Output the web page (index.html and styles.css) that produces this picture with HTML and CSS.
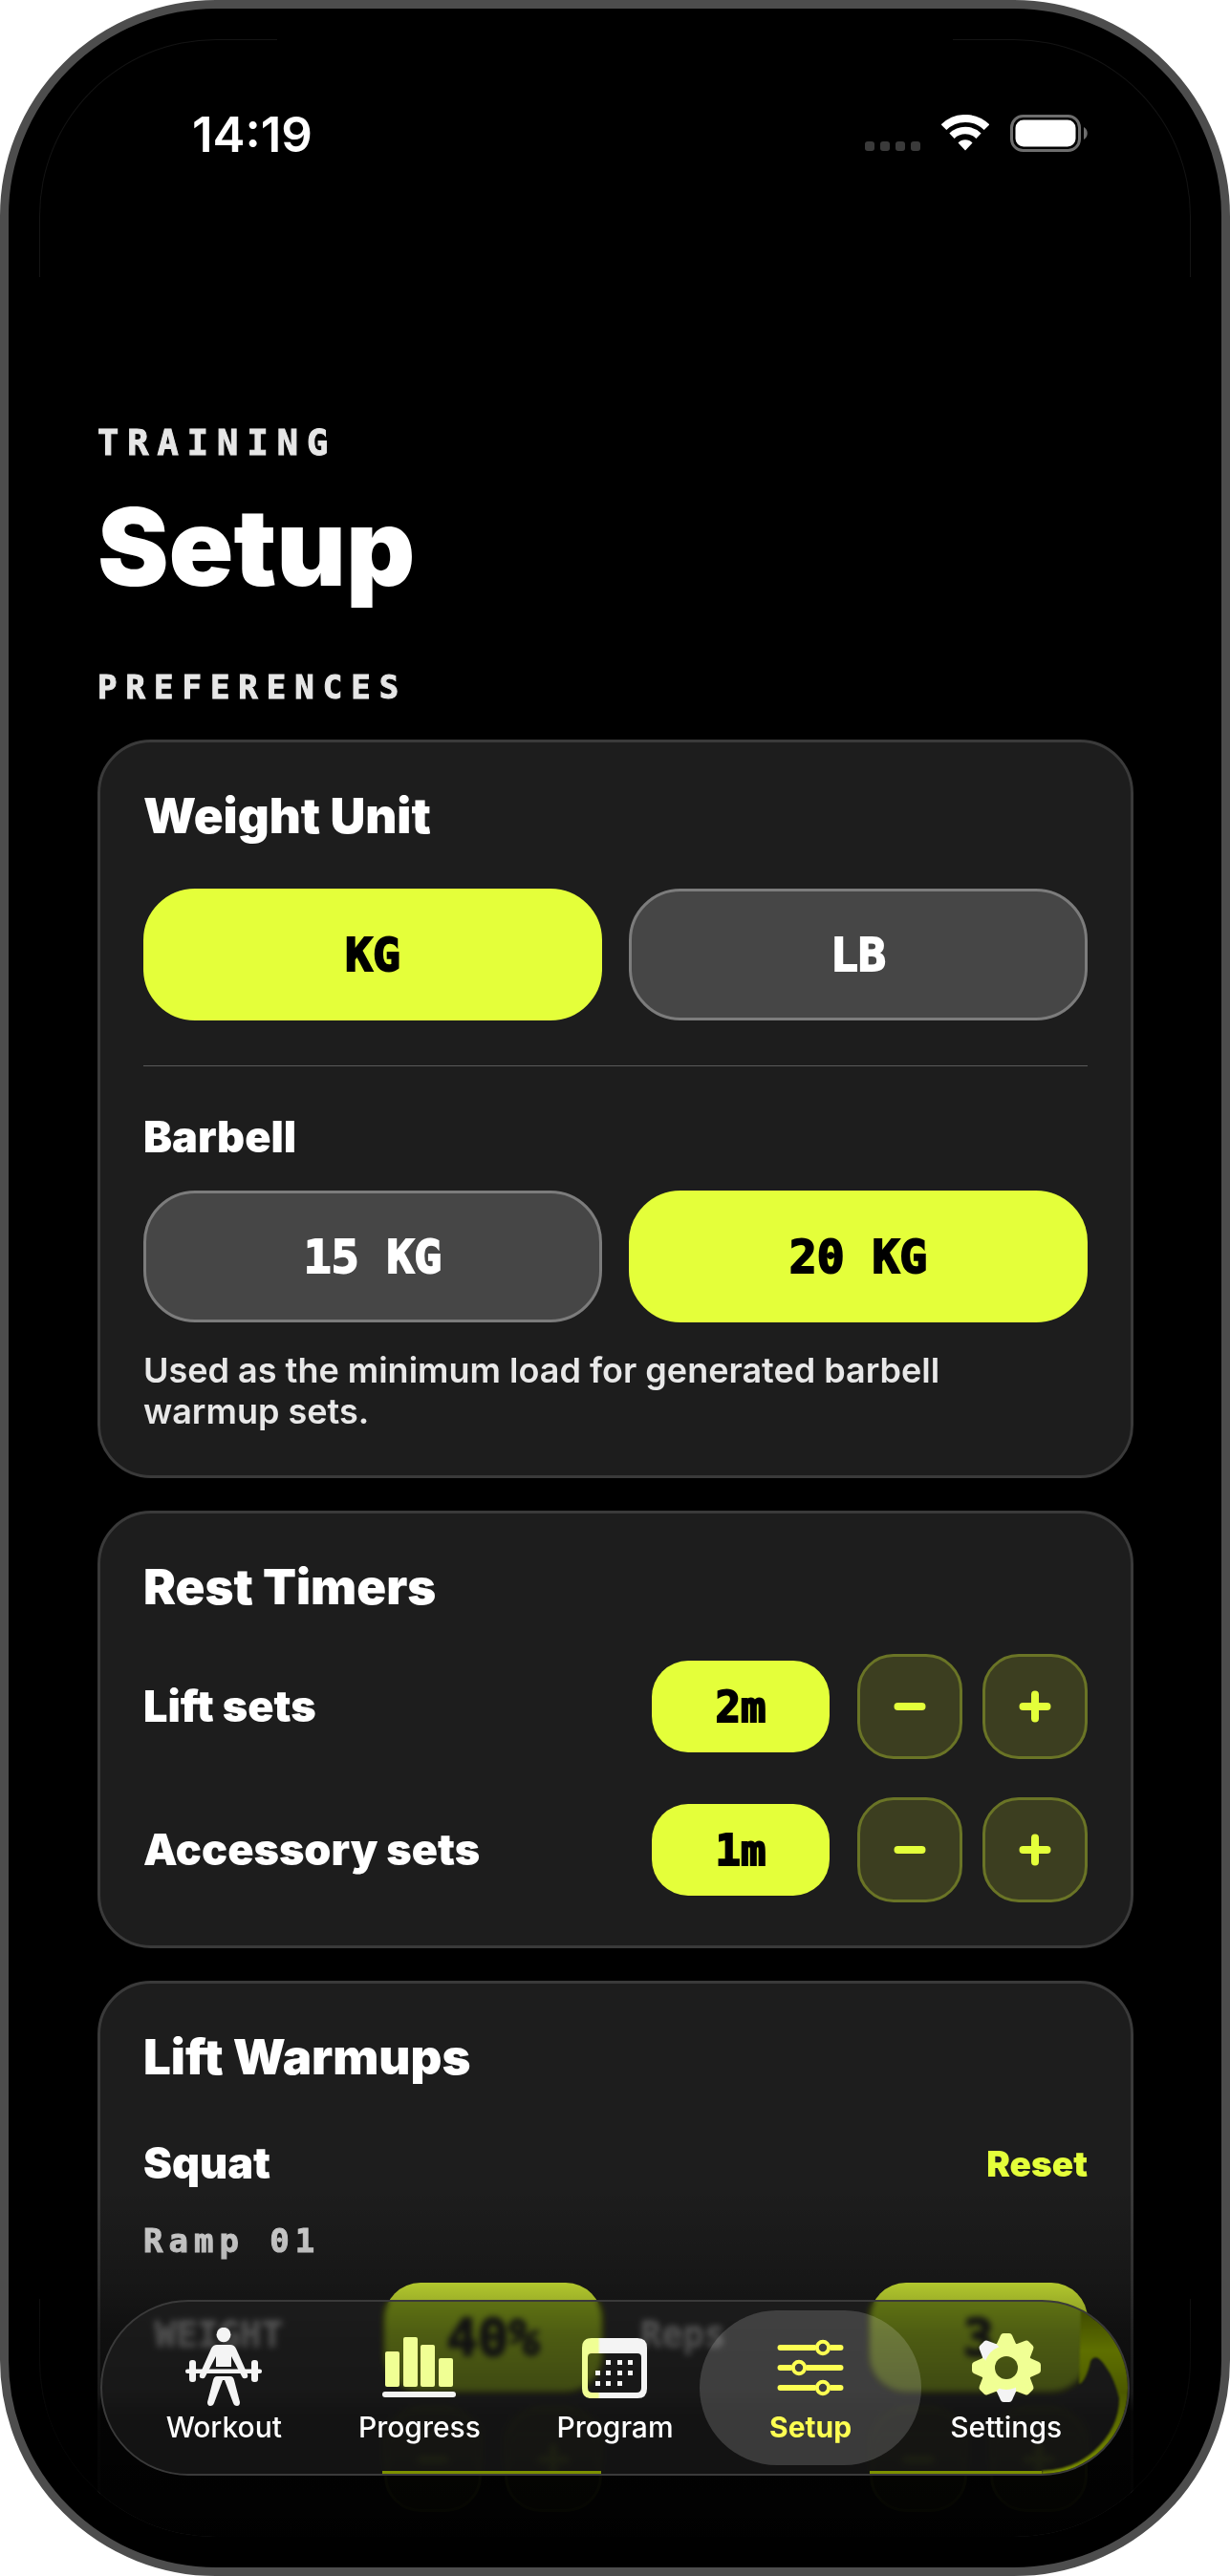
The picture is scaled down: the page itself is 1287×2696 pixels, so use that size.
FILE: index.html
```html
<!DOCTYPE html>
<html lang="en">
<head>
    <meta charset="UTF-8">
    <meta name="viewport" content="width=device-width, initial-scale=1.0">
    <title>Setup</title>
    <link rel="stylesheet" href="styles.css">
</head>
<body>
    <div class="phone">
        <span class="corner corner-tl"></span>
        <span class="corner corner-tr"></span>
        <span class="corner corner-bl"></span>
        <span class="corner corner-br"></span>

        <div class="screen">
            <header class="status-bar">
                <span class="clock">14:19</span>
                <div class="status-icons">
                    <svg width="58" height="12" viewBox="0 0 58 12" fill="#3a3a3a">
                        <rect width="10" height="10" rx="3"/>
                        <rect x="16" width="10" height="10" rx="3"/>
                        <rect x="32" width="10" height="10" rx="3"/>
                        <rect x="48" width="10" height="10" rx="3"/>
                    </svg>
                    <svg width="50" height="40" viewBox="0 0 50 40" fill="none" stroke="#fff">
                        <path d="M2.5 13.2a32 32 0 0 1 45 0" stroke-width="8"/>
                        <path d="M11 22.2a20 20 0 0 1 28 0" stroke-width="7.5"/>
                        <path d="M25 37.5l-7.5-8a10.500 10.500 0 0 1 15 0z" fill="#fff" stroke="none"/>
                    </svg>
                    <svg width="82" height="40" viewBox="0 0 82 40">
                        <rect x="1.500" y="1.500" width="71" height="36" rx="12" fill="none" stroke="#6e6e6e" stroke-width="3"/>
                        <rect x="5.500" y="5.500" width="63" height="28" rx="8.500" fill="#fff"/>
                        <path d="M77 13c5 2.500 5 10.500 0 13z" fill="#6e6e6e"/>
                    </svg>
                </div>
            </header>

            <main class="content">
                <p class="eyebrow">TRAINING</p>
                <h1>Setup</h1>
                <p class="section-label">PREFERENCES</p>

                <section class="card">
                    <h2>Weight Unit</h2>
                    <div class="segments">
                        <button type="button" class="segment selected" aria-pressed="true">KG</button>
                        <button type="button" class="segment" aria-pressed="false">LB</button>
                    </div>
                    <hr>
                    <h3>Barbell</h3>
                    <div class="segments segments-tight">
                        <button type="button" class="segment" aria-pressed="false">15 KG</button>
                        <button type="button" class="segment selected" aria-pressed="true">20 KG</button>
                    </div>
                    <p class="hint">Used as the minimum load for generated barbell warmup sets.</p>
                </section>

                <section class="card">
                    <h2>Rest Timers</h2>
                    <div class="timers">
                        <div class="timer">
                            <h3>Lift sets</h3>
                            <output class="value">2m</output>
                            <div class="stepper">
                                <button type="button" class="step" aria-label="Decrease lift sets rest">
                                    <svg width="34" height="34" viewBox="0 0 34 34"><path d="M4.500 17h25"/></svg>
                                </button>
                                <button type="button" class="step" aria-label="Increase lift sets rest">
                                    <svg width="34" height="34" viewBox="0 0 34 34"><path d="M4.500 17h25M17 4.500v25"/></svg>
                                </button>
                            </div>
                        </div>
                        <div class="timer">
                            <h3>Accessory sets</h3>
                            <output class="value">1m</output>
                            <div class="stepper">
                                <button type="button" class="step" aria-label="Decrease accessory sets rest">
                                    <svg width="34" height="34" viewBox="0 0 34 34"><path d="M4.500 17h25"/></svg>
                                </button>
                                <button type="button" class="step" aria-label="Increase accessory sets rest">
                                    <svg width="34" height="34" viewBox="0 0 34 34"><path d="M4.500 17h25M17 4.500v25"/></svg>
                                </button>
                            </div>
                        </div>
                    </div>
                </section>

                <section class="card">
                    <h2>Lift Warmups</h2>
                    <div class="lift-head">
                        <h3>Squat</h3>
                        <button type="button" class="reset">Reset</button>
                    </div>
                    <p class="ramp-label">Ramp 01</p>
                    <div class="ramp">
                        <div class="ramp-field">
                            <span class="ramp-name">WEIGHT</span>
                            <div class="ramp-control">
                                <output class="value">40%</output>
                                <div class="stepper">
                                    <button type="button" class="step" aria-label="Decrease weight">
                                        <svg width="34" height="34" viewBox="0 0 34 34"><path d="M4.500 17h25"/></svg>
                                    </button>
                                    <button type="button" class="step" aria-label="Increase weight">
                                        <svg width="34" height="34" viewBox="0 0 34 34"><path d="M4.500 17h25M17 4.500v25"/></svg>
                                    </button>
                                </div>
                            </div>
                        </div>
                        <div class="ramp-field">
                            <span class="ramp-name">Reps</span>
                            <div class="ramp-control">
                                <output class="value">3</output>
                                <div class="stepper">
                                    <button type="button" class="step" aria-label="Decrease reps">
                                        <svg width="34" height="34" viewBox="0 0 34 34"><path d="M4.500 17h25"/></svg>
                                    </button>
                                    <button type="button" class="step" aria-label="Increase reps">
                                        <svg width="34" height="34" viewBox="0 0 34 34"><path d="M4.500 17h25M17 4.500v25"/></svg>
                                    </button>
                                </div>
                            </div>
                        </div>
                    </div>
                </section>
            </main>

            <div class="fade"></div>

            <nav class="tab-bar">
                <!-- light bent round the rim of the glass -->
                <svg class="rim" viewBox="0 0 1077 184" preserveAspectRatio="none" fill="none">
                    <defs>
                        <linearGradient id="rim-fill" x1="0" y1="0" x2="0" y2="1">
                            <stop offset="0" stop-color="#3f4a00"/>
                            <stop offset="0.25" stop-color="#5f7000"/>
                            <stop offset="0.5" stop-color="#4c5900"/>
                            <stop offset="1" stop-color="#7d9100"/>
                        </linearGradient>
                    </defs>
                    <path d="M295 181h229" stroke="#7d9100" stroke-width="4"/>
                    <path d="M805 181H985" stroke="#7d9100" stroke-width="4"/>
                    <path class="rim-glow" d="M1026 10Q1052 22 1064 46Q1077 70 1076 92Q1074 136 1046 162Q1020 184 985 183V179Q1018 178 1040 158Q1066 134 1066 103Q1061 82 1052 70Q1042 54 1036 64Q1031 86 1024 88Z" fill="url(#rim-fill)"/>
                </svg>

                <a href="#workout" class="tab">
                    <svg width="80" height="84" viewBox="0 0 80 84" fill="#f4f4f4">
                        <ellipse cx="40" cy="7.500" rx="7.500" ry="7.700"/>
                        <path d="M33 18h14q4 0 6 4l12 27q1 4-2 4-3 1-4-2L48 30v11H32V30L21 51q-1 3-4 2-3 0-2-4l12-27q2-4 6-4z"/>
                        <rect y="43.500" width="80" height="4.500" rx="2"/>
                        <rect x="4" y="34" width="7" height="23" rx="3"/>
                        <rect x="69" y="34" width="7" height="23" rx="3"/>
                        <path d="M33 51h14q3 0 4 4l6 23q0 4-3 4t-4-3L41 55h-2l-9 24q-1 3-4 3t-3-4l6-23q1-4 4-4z"/>
                    </svg>
                    <span>Workout</span>
                </a>
                <a href="#progress" class="tab">
                    <svg width="77" height="64" viewBox="0 0 77 64" fill="#f0ff94">
                        <rect x="3" y="15" width="15" height="37" rx="2"/>
                        <rect x="22" width="15" height="52" rx="2"/>
                        <rect x="40" y="8" width="15" height="44" rx="2"/>
                        <rect x="59" y="22" width="15" height="30" rx="2"/>
                        <rect y="57" width="77" height="6" rx="3" fill="#f4f4f4"/>
                    </svg>
                    <span>Progress</span>
                </a>
                <a href="#program" class="tab">
                    <svg width="68" height="63" viewBox="0 0 68 63">
                        <defs>
                            <linearGradient id="lit" x1="0" x2="1">
                                <stop offset="0.24" stop-color="#f0ff94"/>
                                <stop offset="0.28" stop-color="#f4f4f4"/>
                            </linearGradient>
                        </defs>
                        <path fill="url(#lit)" fill-rule="evenodd" d="M10 0H58Q68 0 68 10V53Q68 63 58 63H10Q0 63 0 53V10Q0 0 10 0ZM10 16Q6 16 6 20V52Q6 57 11 57H57Q62 57 62 52V20Q62 16 58 16Z"/>
                        <g fill="#f4f4f4">
                            <rect x="25" y="23" width="5" height="5"/>
                            <rect x="37" y="23" width="5" height="5"/>
                            <rect x="48" y="23" width="5" height="5"/>
                            <rect x="14" y="34" width="5" height="5"/>
                            <rect x="25" y="34" width="5" height="5"/>
                            <rect x="37" y="34" width="5" height="5"/>
                            <rect x="48" y="34" width="5" height="5"/>
                            <rect x="14" y="45" width="5" height="5"/>
                            <rect x="25" y="45" width="5" height="5"/>
                            <rect x="37" y="45" width="5" height="5"/>
                        </g>
                    </svg>
                    <span>Program</span>
                </a>
                <a href="#setup" class="tab active" aria-current="page">
                    <svg width="70" height="60" viewBox="0 0 70 60" fill="none" stroke="#fdff52" stroke-linecap="round">
                        <path d="M3.500 9H38M58 9h8.500M3.500 30H13M33 30h33.500M3.500 51H38M58 51h8.500" stroke-width="6"/>
                        <circle cx="48" cy="9" r="6.200" stroke-width="4"/>
                        <circle cx="23" cy="30" r="6.200" stroke-width="4"/>
                        <circle cx="48" cy="51" r="6.200" stroke-width="4"/>
                        <path d="M38 9h2M56 9h2M13 30h2M31 30h2M38 51h2M56 51h2" stroke-width="6" stroke-linecap="butt"/>
                    </svg>
                    <span>Setup</span>
                </a>
                <a href="#settings" class="tab">
                    <svg width="72" height="72" viewBox="-36 -36 72 72">
                        <defs>
                            <path id="tooth" d="M-10-25L-6-34Q-5-36-3-36H3Q5-36 6-34L10-25V-18H-10Z"/>
                            <mask id="hub">
                                <rect x="-36" y="-36" width="72" height="72" fill="#fff"/>
                                <circle r="12" fill="#000"/>
                            </mask>
                        </defs>
                        <g mask="url(#hub)" fill="#f0ff94">
                            <circle r="27"/>
                            <use href="#tooth"/>
                            <use href="#tooth" transform="rotate(45)"/>
                            <use href="#tooth" transform="rotate(90)"/>
                            <use href="#tooth" transform="rotate(135)"/>
                            <use href="#tooth" transform="rotate(180)" fill="#f4f4f4"/>
                            <use href="#tooth" transform="rotate(225)"/>
                            <use href="#tooth" transform="rotate(270)"/>
                            <use href="#tooth" transform="rotate(315)" fill="#f4f4f4"/>
                            <circle r="23"/>
                        </g>
                    </svg>
                    <span>Settings</span>
                </a>
            </nav>
        </div>
    </div>
</body>
</html>
```

FILE: styles.css
```css
* {
    box-sizing: border-box;
}

body {
    margin: 0;
    background: #fff;
    color: #fff;
    font-family: Inter, "Liberation Sans", sans-serif;
}

h1, h2, h3, p {
    margin: 0;
}

button {
    padding: 0;
    border: 0;
    background: none;
    color: inherit;
    font: inherit;
}

svg {
    display: block;
}

.phone {
    position: relative;
    height: 100vh;
    padding: 32px;
    border: 9px solid #4d4d4d;
    border-radius: 226px;
    background: #000;
    overflow: hidden;
}

/* faint edge of the display, only visible in the corners */
.corner {
    position: absolute;
    width: 249px;
    height: 249px;
    border: 0 solid #141414;
}

.corner-tl {
    top: 32px;
    left: 32px;
    border-width: 1px 0 0 1px;
    border-top-left-radius: 185px;
}

.corner-tr {
    top: 32px;
    right: 32px;
    border-width: 1px 1px 0 0;
    border-top-right-radius: 185px;
}

.corner-bl {
    bottom: 32px;
    left: 32px;
    border-width: 0 0 1px 1px;
    border-bottom-left-radius: 185px;
}

.corner-br {
    bottom: 32px;
    right: 32px;
    border-width: 0 1px 1px 0;
    border-bottom-right-radius: 185px;
}

.screen {
    position: relative;
    height: 100%;
    border-radius: 185px;
    overflow: hidden;
}

.status-bar {
    display: flex;
    justify-content: space-between;
    align-items: center;
    height: 198px;
    padding: 0 107px 0 160px;
}

.clock {
    font-size: 51px;
    font-weight: 600;
}

.status-icons {
    display: flex;
    align-items: flex-end;
    gap: 22px;
}

.content {
    padding: 203px 60px 0 61px;
}

.eyebrow,
.section-label,
.ramp-label,
.ramp-name,
.segment,
.value {
    font-family: "DejaVu Sans Mono", monospace;
    font-weight: 700;
    -webkit-text-stroke: 1px currentColor;
}

.eyebrow {
    color: #e6e6e6;
    font-size: 37px;
    line-height: 44px;
    letter-spacing: 9px;
}

h1 {
    margin-top: 21px;
    font-size: 112px;
    font-weight: 900;
    line-height: 130px;
}

.section-label {
    margin-top: 62px;
    margin-bottom: 35px;
    color: #e6e6e6;
    font-size: 34px;
    line-height: 40px;
    letter-spacing: 9px;
}

.card {
    margin-bottom: 34px;
    padding: 45px;
    border: 3px solid #3a3a3a;
    border-radius: 56px;
    background: #1d1d1d;
}

h2 {
    font-size: 51px;
    font-weight: 900;
    line-height: 64px;
}

h3 {
    font-size: 45px;
    font-weight: 900;
    line-height: 54px;
}

.segments {
    display: grid;
    grid-template-columns: 1fr 1fr;
    gap: 28px;
    margin-top: 44px;
}

.segments-tight {
    margin-top: 29px;
}

.segment {
    height: 138px;
    border: 3px solid #7c7c7c;
    border-radius: 54px;
    background: #464646;
    color: #fff;
    font-size: 48px;
    -webkit-text-stroke-width: 2px;
}

.segment.selected {
    border-color: #e4ff3a;
    background: #e4ff3a;
    color: #000;
}

hr {
    height: 1px;
    margin: 47px 0;
    border: 0;
    background: #5a5a5a;
}

.hint {
    max-width: 900px;
    margin-top: 29px;
    color: #e8e8e8;
    font-size: 36px;
    font-weight: 600;
    line-height: 43px;
}

.timers {
    display: grid;
    gap: 40px;
    margin-top: 38px;
}

.timer {
    display: flex;
    align-items: center;
    gap: 29px;
}

.timer h3 {
    flex: 1;
}

.value {
    display: flex;
    align-items: center;
    justify-content: center;
    width: 186px;
    height: 96px;
    border-radius: 38px;
    background: #e4ff3a;
    color: #000;
    font-size: 44px;
    -webkit-text-stroke-width: 2px;
}

.stepper {
    display: flex;
    gap: 21px;
}

.step {
    display: flex;
    align-items: center;
    justify-content: center;
    width: 110px;
    height: 110px;
    border: 3px solid #6a7426;
    border-radius: 38px;
    background: #3c3e20;
}

.step svg {
    fill: none;
    stroke: #e4ff3a;
    stroke-width: 8px;
    stroke-linecap: round;
}

.lift-head {
    display: flex;
    align-items: center;
    justify-content: space-between;
    margin-top: 52px;
}

.reset {
    color: #e4ff3a;
    font-size: 37px;
    font-weight: 900;
}

.ramp-label {
    margin-top: 34px;
    color: #dcdcdc;
    font-size: 34px;
    line-height: 40px;
    letter-spacing: 6px;
}

.ramp {
    display: grid;
    grid-template-columns: 1fr 1fr;
    gap: 28px;
    margin-top: 24px;
}

.ramp-field {
    display: flex;
    justify-content: space-between;
}

.ramp-name {
    padding-left: 12px;
    color: #dcdcdc;
    font-size: 37px;
    line-height: 110px;
}

.ramp-control {
    width: 228px;
}

.ramp-control .value {
    width: 100%;
    height: 114px;
    font-size: 54px;
}

.ramp-control .stepper {
    gap: 24px;
    margin-top: 16px;
}

.ramp-control .step {
    flex: 1;
}

.fade {
    position: absolute;
    right: 0;
    bottom: 0;
    left: 0;
    height: 365px;
    background: linear-gradient(transparent, rgba(0, 0, 0, 0.22) 27%, rgba(0, 0, 0, 0.46) 42%, rgba(0, 0, 0, 0.6) 59%, rgba(0, 0, 0, 0.88) 64%, rgba(0, 0, 0, 0.96));
}

.tab-bar {
    position: absolute;
    right: 64px;
    bottom: 64px;
    left: 64px;
    display: flex;
    height: 184px;
    padding: 27px 25px 0;
    border: 2px solid #3a3a3a;
    border-radius: 92px;
    background: rgba(36, 36, 36, 0.5);
    backdrop-filter: blur(3px) saturate(2);
    overflow: hidden;
}

.rim {
    position: absolute;
    top: -2px;
    left: -2px;
    width: calc(100% + 4px);
    height: 184px;
}

.rim-glow {
    filter: blur(1px);
}

.tab {
    position: relative;
    display: grid;
    grid-template-rows: 84px 40px;
    flex: 1;
    justify-items: center;
    align-items: center;
    color: #fff;
    font-size: 30px;
    font-weight: 500;
    line-height: 40px;
    text-decoration: none;
}

.tab svg,
.tab span {
    position: relative;
}

.tab.active {
    color: #fdff52;
    font-weight: 700;
}

.tab.active::before {
    content: "";
    position: absolute;
    top: -18px;
    right: -14px;
    left: -14px;
    height: 162px;
    border-radius: 81px;
    background: rgba(255, 255, 255, 0.17);
}
```
